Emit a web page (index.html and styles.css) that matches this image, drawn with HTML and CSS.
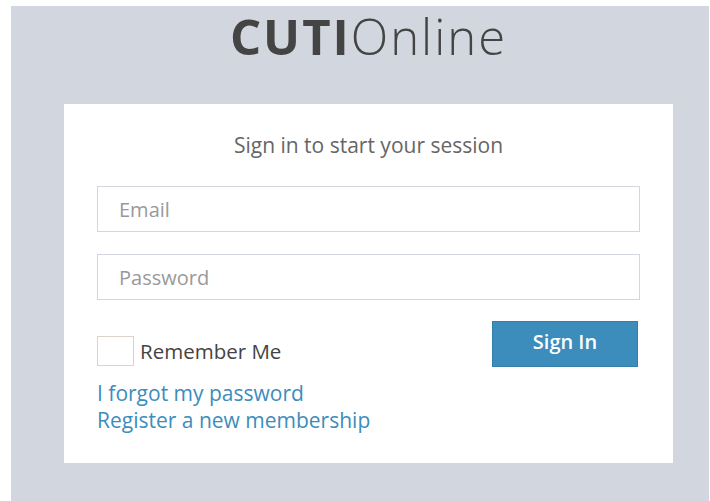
FILE: index.html
```html
<!DOCTYPE html>
<html lang="en">
<head>
<meta charset="utf-8">
<title>CUTIOnline | Log in</title>
<link rel="stylesheet" href="styles.css">
</head>
<body>
<div class="login-page">
  <div class="login-logo"><b>CUTI</b>Online</div>
  <div class="login-box">
    <p class="login-msg">Sign in to start your session</p>
    <form class="login-form">
      <input class="field" type="email" placeholder="Email">
      <input class="field" type="password" placeholder="Password">
      <div class="actions">
        <label class="remember"><span class="check"></span>Remember Me</label>
        <button class="btn-signin" type="button">Sign In</button>
      </div>
    </form>
    <div class="links">
      <a href="#">I forgot my password</a>
      <a href="#">Register a new membership</a>
    </div>
  </div>
</div>
</body>
</html>
```
FILE: styles.css
```css
html, body {
  margin: 0;
  background: #ffffff;
}

body {
  font-family: "Open Sans", "Liberation Sans", sans-serif;
  color: #333;
}

.login-page {
  margin: 6px 1px 0 11px;
  height: 495px;
  background: #d2d6de;
  padding-left: 53px;
  box-sizing: border-box;
}

.login-logo {
  width: 609px;
  text-align: center;
  font-size: 49px;
  letter-spacing: 2px;
  line-height: 60px;
  color: #444;
  font-weight: 300;
  padding-top: 0;
  height: 98px;
  box-sizing: border-box;
}

.login-logo b {
  font-weight: 700;
}

.login-box {
  width: 609px;
  height: 359px;
  background: #fff;
  box-sizing: border-box;
  padding: 23px 33px 0;
}

.login-msg {
  margin: 0;
  text-align: center;
  color: #666;
  font-size: 21px;
  line-height: 36px;
  height: 59px;
}

.login-form {
  display: flex;
  flex-direction: column;
  gap: 22px;
}

.field {
  display: block;
  width: 100%;
  height: 46px;
  box-sizing: border-box;
  border: 1px solid #d2d6de;
  padding: 0 21px;
  font: inherit;
  font-size: 20px;
  color: #555;
  outline: none;
}

.field::placeholder {
  color: #999;
}

.actions {
  display: flex;
  justify-content: space-between;
  align-items: flex-start;
  padding-right: 2px;
}

.remember {
  display: flex;
  align-items: center;
  gap: 6px;
  margin-top: 14px;
  font-size: 20.5px;
  color: #444;
}

.check {
  width: 35px;
  height: 28px;
  border: 1px solid #d9d3cc;
  background: #fff;
}

.btn-signin {
  width: 146px;
  height: 46px;
  margin-top: -1px;
  background: #3c8dbc;
  border: 1px solid #367fa9;
  color: #fff;
  font: inherit;
  font-size: 20px;
  font-weight: 600;
  padding: 0 0 5px;
}

.links {
  display: flex;
  flex-direction: column;
  margin-top: 13px;
}

.links a {
  color: #3c8dbc;
  text-decoration: none;
  font-size: 21px;
  line-height: 27px;
}
```
